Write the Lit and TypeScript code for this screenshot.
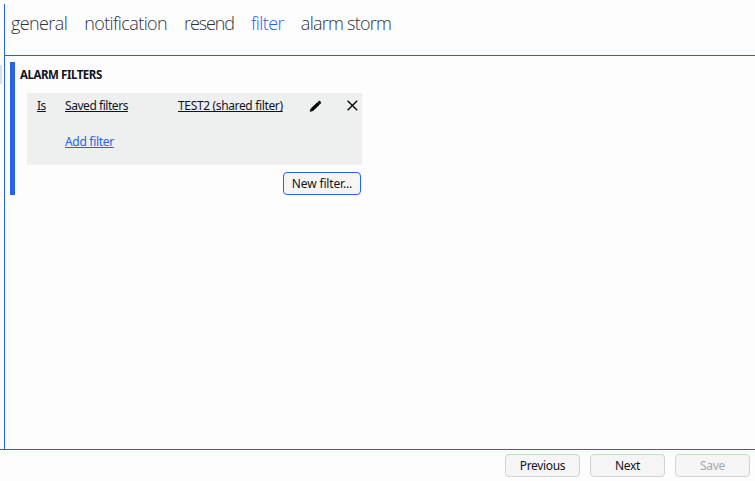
import { LitElement, html, css } from 'lit';
import { customElement, property, state } from 'lit/decorators.js';
import { classMap } from 'lit/directives/class-map.js';

const TABS = ['general', 'notification', 'resend', 'filter', 'alarm storm'];

@customElement('wizard-button')
export class WizardButton extends LitElement {
  @property({ type: Boolean, reflect: true }) accent = false;
  @property({ type: Boolean, reflect: true }) disabled = false;

  static styles = css`
    :host {
      display: block;
      width: 75px;
      height: 23px;
    }

    .button {
      display: block;
      box-sizing: border-box;
      width: 100%;
      height: 100%;
      padding: 0;
      border: 1px solid #d2d2d2;
      border-radius: 4px;
      background: #f5f5f5;
      color: #11131f;
      font: 12px/20px 'Noto Sans', 'Open Sans', sans-serif;
      letter-spacing: -0.35px;
      white-space: nowrap;
    }

    .button:disabled {
      color: #a7a7a9;
    }

    :host([accent]) .button {
      border-color: #2563eb;
      letter-spacing: -0.15px;
    }
  `;

  render() {
    return html`
      <button class="button" ?disabled=${this.disabled}><slot></slot></button>
    `;
  }
}

@customElement('alarm-filters')
export class AlarmFilters extends LitElement {
  @property({ attribute: false }) filters = [
    { mode: 'Is', type: 'Saved filters', name: 'TEST2 (shared filter)' },
  ];

  static styles = css`
    :host {
      display: block;
      box-sizing: border-box;
      width: 352px;
      height: 133px;
      padding: 0 0 0 5px;
      border-left: 5px solid #2563eb;
    }

    .title {
      height: 31px;
      margin: 0;
      font-size: 11.5px;
      font-weight: 700;
      line-height: 26px;
      letter-spacing: -0.45px;
    }

    .list {
      box-sizing: border-box;
      width: 335px;
      height: 72px;
      margin-left: 7px;
      padding-left: 10px;
      background: #eef0f0;
    }

    .row {
      display: grid;
      grid-template-columns: 28px 113px 131px 37px 16px;
      height: 36px;
      line-height: 26px;
    }

    .link {
      color: #11131f;
      text-decoration: underline;
      text-underline-offset: 1px;
      text-decoration-thickness: 1px;
      text-decoration-skip-ink: none;
      white-space: nowrap;
    }

    .type {
      letter-spacing: -0.45px;
    }

    .name {
      letter-spacing: -0.35px;
    }

    .add {
      grid-column: 2;
      color: #2563eb;
    }

    .icon {
      display: block;
      width: 14px;
      height: 14px;
      margin-top: 6px;
    }

    .actions {
      display: flex;
      justify-content: flex-end;
      padding: 7px 1px 0 0;
    }

    .new {
      width: 78px;
    }
  `;

  render() {
    return html`
      <h2 class="title">ALARM FILTERS</h2>
      <div class="list">
        ${this.filters.map(
          (f) => html`
            <div class="row">
              <div><a class="link type">${f.mode}</a></div>
              <div><a class="link type">${f.type}</a></div>
              <div><a class="link name">${f.name}</a></div>
              <svg class="icon" viewBox="0 0 14 14">
                <path d="M1.2 12.3 L2 9.7 L8.4 3.7 L10.3 5.6 L4 11.5 Z M9 3.2 L9.9 2.4 Q10.5 2 11.2 2.6 Q11.9 3.3 11.5 4.1 L10.8 5 Z" fill="#000" stroke="#000" stroke-width="0.9" stroke-linejoin="round" />
              </svg>
              <svg class="icon" viewBox="0 0 14 14">
                <path d="M1.6 1.8 L11.2 11.2 M11.2 1.8 L1.6 11.2" fill="none" stroke="#000" stroke-width="1.3" />
              </svg>
            </div>
          `
        )}
        <div class="row">
          <div class="add"><a class="link add">Add filter</a></div>
        </div>
      </div>
      <div class="actions">
        <wizard-button class="new" accent>New filter...</wizard-button>
      </div>
    `;
  }
}

@customElement('app-root')
export class AppRoot extends LitElement {
  @state() active = 'filter';

  static styles = css`
    :host {
      display: flex;
      flex-direction: column;
      box-sizing: border-box;
      width: 755px;
      height: 481px;
      padding-top: 4px;
      overflow: hidden;
      background: #fdfdfd;
      color: #11131f;
      font: 12px 'Noto Sans', 'Open Sans', sans-serif;
      letter-spacing: -0.3px;
    }

    .body {
      display: flex;
      height: 445px;
    }

    /* edge of the selected item in the side list */
    .side {
      width: 4px;
      padding-top: 61px;
    }

    .selected {
      width: 2px;
      height: 19px;
      background: #d5dff2;
    }

    .main {
      flex: 1;
      border-left: 1px solid #2563eb;
    }

    .tabs {
      display: flex;
      gap: 17px;
      height: 51px;
      padding-left: 6px;
      border-bottom: 1px solid #2d60d2;
      font: 300 18px/38px 'Open Sans', 'Noto Sans', sans-serif;
      letter-spacing: -0.6px;
      white-space: nowrap;
    }

    .tab {
      color: #30323c;
    }

    .tab:nth-child(3) {
      letter-spacing: -1.1px;
    }

    .tab:nth-child(5) {
      letter-spacing: -0.75px;
    }

    .tab.active {
      color: #2563eb;
    }

    .page {
      padding: 6px 0 0 5px;
    }

    .footer {
      display: flex;
      flex: 1;
      justify-content: flex-end;
      gap: 10px;
      padding: 4px 5px 0 0;
      border-top: 1px solid #2d60d2;
    }
  `;

  render() {
    return html`
      <div class="body">
        <div class="side"><div class="selected"></div></div>
        <div class="main">
          <nav class="tabs">
            ${TABS.map(
              (tab) => html`
                <a
                  class=${classMap({ tab: true, active: tab === this.active })}
                  @click=${() => (this.active = tab)}
                  >${tab}</a
                >
              `
            )}
          </nav>
          <div class="page"><alarm-filters></alarm-filters></div>
        </div>
      </div>
      <div class="footer">
        <wizard-button>Previous</wizard-button>
        <wizard-button>Next</wizard-button>
        <wizard-button disabled>Save</wizard-button>
      </div>
    `;
  }
}
